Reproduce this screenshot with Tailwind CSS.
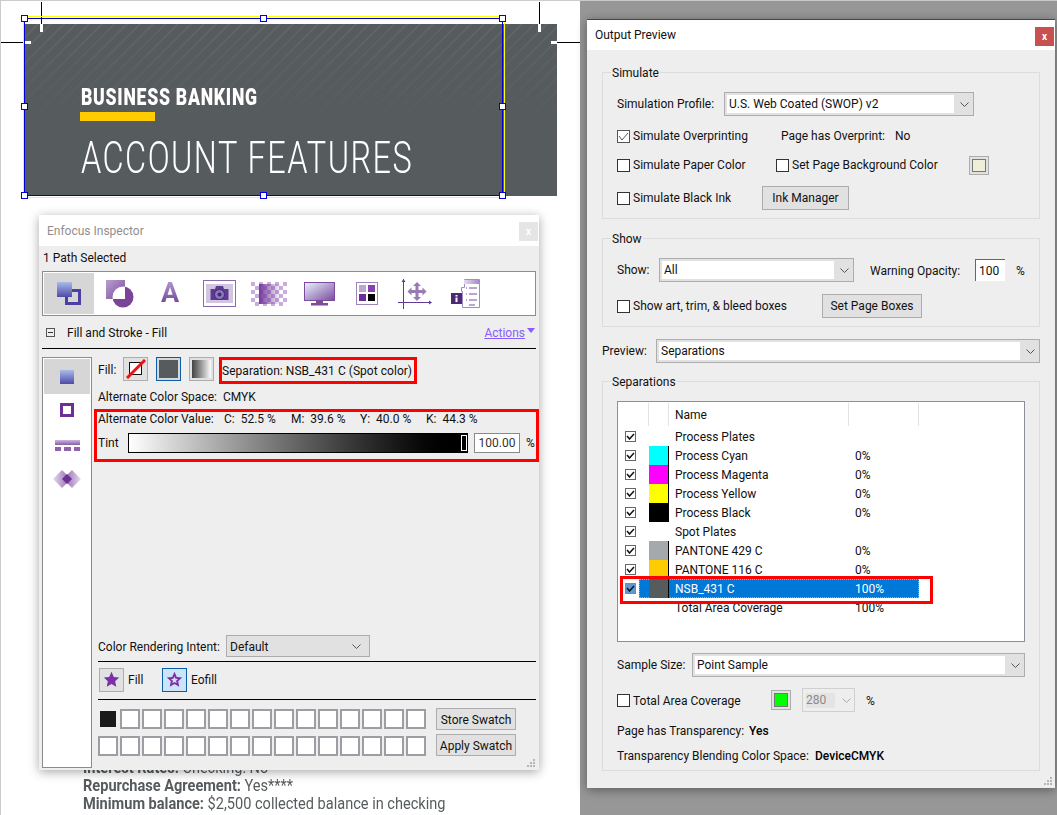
<!DOCTYPE html>
<html>
<head>
<meta charset="utf-8">
<title>Output Preview</title>
<script src="https://cdn.jsdelivr.net/npm/@tailwindcss/browser@4"></script>
</head>
<body class="w-[1057px] h-[815px] overflow-hidden font-[Roboto,sans-serif] text-[12px] text-[#111]">
<div class="flex w-[1057px] h-[815px]">

  <!-- document canvas -->
  <div class="relative w-[580px] h-[815px] bg-white border-t border-l border-[#cccccc] overflow-hidden">
    <div class="absolute left-[23px] top-[23px] w-[533px] h-[172px] bg-[#565b5d] overflow-hidden">
      <div class="absolute inset-0 bg-[image:repeating-linear-gradient(135deg,#5f6466_0px,#5f6466_2px,transparent_2px,transparent_9px)] [mask-image:linear-gradient(to_bottom,black,transparent_60%)]"></div>
      <div class="absolute left-[57px] top-[59px] text-white">
        <div class="origin-left scale-x-[0.735] whitespace-nowrap font-black text-[24px] leading-[28px] tracking-[1px]">BUSINESS BANKING</div>
        <div class="w-[75px] h-[9px] bg-[#ffcc00] mt-[1px] -ml-[1px]"></div>
        <div class="origin-left scale-x-[0.737] whitespace-nowrap font-light text-[44px] leading-[54px] mt-[10px] tracking-[2px]">ACCOUNT FEATURES</div>
      </div>
    </div>

    <!-- crop marks -->
    <div class="absolute left-[40px] top-[1px] w-[1px] h-[22px] bg-black"></div>
    <div class="absolute left-[39px] top-[23px] w-[3px] h-[8px] bg-white"></div>
    <div class="absolute left-[538px] top-[1px] w-[1px] h-[22px] bg-black"></div>
    <div class="absolute left-[537px] top-[23px] w-[3px] h-[8px] bg-white"></div>
    <div class="absolute left-0 top-[41px] w-[22px] h-[1px] bg-black"></div>
    <div class="absolute left-[22px] top-[40px] w-[8px] h-[3px] bg-white"></div>
    <div class="absolute left-[550px] top-[41px] w-[29px] h-[1px] bg-black"></div>
    <div class="absolute left-[550px] top-[40px] w-[6px] h-[3px] bg-white"></div>

    <!-- selection -->
    <div class="absolute left-[22px] top-[15px] w-[482px] h-[182px] border border-[#ffff00]"></div>
    <div class="absolute left-[23px] top-[17px] w-[479px] h-[178px] border border-[#0000dd]"></div>
    <div class="absolute left-[20px] top-[14px] w-[7px] h-[7px] bg-white border border-[#0000dd]"></div>
    <div class="absolute left-[259px] top-[14px] w-[7px] h-[7px] bg-white border border-[#0000dd]"></div>
    <div class="absolute left-[498px] top-[14px] w-[7px] h-[7px] bg-white border border-[#0000dd]"></div>
    <div class="absolute left-[20px] top-[102px] w-[7px] h-[7px] bg-white border border-[#0000dd]"></div>
    <div class="absolute left-[498px] top-[102px] w-[7px] h-[7px] bg-white border border-[#0000dd]"></div>
    <div class="absolute left-[20px] top-[191px] w-[7px] h-[7px] bg-white border border-[#0000dd]"></div>
    <div class="absolute left-[259px] top-[191px] w-[7px] h-[7px] bg-white border border-[#0000dd]"></div>
    <div class="absolute left-[498px] top-[191px] w-[7px] h-[7px] bg-white border border-[#0000dd]"></div>

    <!-- body copy behind the inspector -->
    <div class="absolute left-[82px] top-[758px] text-[#565b5d] text-[16px] leading-[18px] origin-left scale-x-[0.91] whitespace-nowrap">
      <div><b>Interest Rates:</b> Checking: No</div>
      <div><b>Repurchase Agreement:</b> Yes****</div>
      <div><b>Minimum balance:</b> $2,500 collected balance in checking</div>
    </div>

    <!-- Enfocus Inspector -->
    <div class="absolute left-[38px] top-[214px] w-[500px] h-[555px] bg-[#eeeeee] shadow-[0_2px_10px_rgba(0,0,0,0.35)] flex flex-col">
      <div class="h-[31px] bg-white flex items-center justify-between pl-[8px] pr-[1px] shrink-0">
        <span class="text-[#8f8f8f]">Enfocus Inspector</span>
        <div class="w-[19px] h-[19px] mt-[1px] bg-[#e5e5e5] text-white text-[10px] font-bold flex items-center justify-center">x</div>
      </div>
      <div class="h-[25px] pl-[4px] pb-[2px] flex items-center shrink-0">1 Path Selected</div>

      <div class="mx-[3px] h-[45px] border border-[#8c8c90] p-px bg-white flex items-center shrink-0">
        <div class="w-[50px] h-[41px] bg-[#d6d6d6] flex items-center justify-center shrink-0">
          <svg width="24" height="23" viewBox="0 0 24 23">
            <defs><linearGradient id="g1" x1="0" y1="0" x2="0" y2="1"><stop offset="0" stop-color="#a8bce8"/><stop offset="1" stop-color="#4f4aa8"/></linearGradient></defs>
            <rect x="9.5" y="8.5" width="13" height="13" fill="none" stroke="#4a3fa5" stroke-width="3"/>
            <rect x="0" y="0" width="15" height="15" fill="url(#g1)"/>
          </svg>
        </div>
        <div class="w-[12px] shrink-0"></div>
        <svg class="shrink-0" width="28" height="28" viewBox="0 0 28 28">
          <defs>
            <linearGradient id="g2" x1="0" y1="0" x2="1" y2="1"><stop offset="0" stop-color="#b7a0cf"/><stop offset="1" stop-color="#7a4a9e"/></linearGradient>
            <clipPath id="c2"><rect x="0" y="0" width="19" height="19"/></clipPath>
          </defs>
          <rect x="0" y="0" width="19" height="19" fill="url(#g2)"/>
          <circle cx="17" cy="17" r="10.5" fill="#7a4598"/>
          <circle cx="17" cy="17" r="10.5" fill="#ffffff" clip-path="url(#c2)"/>
        </svg>
        <div class="w-[26px] shrink-0 ml-[23px] flex justify-center">
          <span class="font-bold text-[27px] leading-[27px] bg-linear-to-b from-[#b39bcc] to-[#6b3a96] bg-clip-text text-transparent">A</span>
        </div>
        <svg class="shrink-0 ml-[20px]" width="33" height="27" viewBox="0 0 33 27">
          <rect x="0.5" y="0.5" width="32" height="26" fill="#fff" stroke="#8a6aa8"/>
          <rect x="3" y="4" width="27" height="19" fill="#d2c5e0"/>
          <path d="M7.500 9h4.500l1-3h7l1 3h4.500v11h-18z" fill="#5f3a92"/>
          <circle cx="16.500" cy="14.500" r="5" fill="#8d76b6" stroke="#43277a"/>
          <circle cx="16.500" cy="14.500" r="2" fill="#43277a"/>
        </svg>
        <svg class="shrink-0 ml-[15px]" width="36" height="24" viewBox="0 0 36 24">
          <defs>
            <pattern id="p5" width="8" height="8" patternUnits="userSpaceOnUse"><rect width="4" height="4" fill="#c9aedd"/><rect x="4" y="4" width="4" height="4" fill="#c9aedd"/></pattern>
            <linearGradient id="g5" x1="0" y1="0" x2="1" y2="0"><stop offset="0" stop-color="#74389c"/><stop offset="1" stop-color="#74389c" stop-opacity="0"/></linearGradient>
          </defs>
          <rect width="36" height="24" fill="url(#p5)"/>
          <rect x="8" y="2" width="22" height="20" fill="url(#g5)"/>
        </svg>
        <svg class="shrink-0 ml-[17px]" width="31" height="24" viewBox="0 0 31 24">
          <defs><linearGradient id="g6" x1="0" y1="0" x2="1" y2="1"><stop offset="0" stop-color="#e8f5fc"/><stop offset="1" stop-color="#7a4a9e"/></linearGradient></defs>
          <rect x="0.5" y="0.5" width="30" height="18" fill="url(#g6)" stroke="#7d4a9e"/>
          <rect x="12" y="19" width="7" height="2" fill="#7d4a9e"/>
          <rect x="7" y="21" width="17" height="2.500" fill="#7d4a9e"/>
        </svg>
        <svg class="shrink-0 ml-[21px]" width="22" height="23" viewBox="0 0 22 23">
          <rect x="0.5" y="0.5" width="21" height="22" fill="#fff" stroke="#9e84bb"/>
          <rect x="3" y="3" width="7" height="7" fill="#b8a8cc"/>
          <rect x="12" y="3" width="7" height="7" fill="#8a3fb0"/>
          <rect x="3" y="12" width="7" height="7" fill="#6f2f9a"/>
          <rect x="12" y="12" width="7" height="7" fill="#000"/>
        </svg>
        <svg class="shrink-0 ml-[20px]" width="34" height="30" viewBox="0 0 34 30">
          <path d="M5.500 0v30M0 23.500h33" stroke="#5f3a92" fill="none"/>
          <path d="M5.500 0l-2 3h4zM34 23.500l-3-2v4z" fill="#5f3a92"/>
          <path d="M19 3l4 4h-2.500v4h4v-2.500l4 4-4 4v-2.500h-4v4h2.500l-4 4-4-4h2.500v-4h-4v2.500l-4-4 4-4v2.500h4v-4h-2.500z" fill="#9a7ab5"/>
        </svg>
        <svg class="shrink-0 ml-[19px]" width="29" height="29" viewBox="0 0 29 29">
          <defs><linearGradient id="g9" x1="0" y1="0" x2="1" y2="0"><stop offset="0" stop-color="#e5dcef"/><stop offset="1" stop-color="#a58bc6"/></linearGradient></defs>
          <path d="M13.500 0.500h15v28h-17v-16h-1v-4h3z" fill="#fff" stroke="#a58bc6"/>
          <rect x="13" y="1" width="15" height="4" fill="url(#g9)"/>
          <path d="M18 9h8M18 15h8M18 21h8M18 26h6" stroke="#7d4a9e" fill="none"/>
          <path d="M15 9h1M15 15h1M15 21h1" stroke="#7d4a9e" fill="none"/>
          <rect x="0" y="14" width="11" height="11" fill="#4b2a72"/>
          <rect x="4.500" y="16" width="2" height="1.500" fill="#fff"/>
          <rect x="4.500" y="18.500" width="2" height="4.500" fill="#fff"/>
        </svg>
      </div>

      <div class="mx-[3px] h-[33px] border-b border-black flex items-center shrink-0 relative">
        <div class="w-[9px] h-[9px] ml-[4px] border border-[#555] flex items-center justify-center shrink-0"><div class="w-[5px] h-px bg-[#333]"></div></div>
        <span class="ml-[12px] pt-[2px]">Fill and Stroke - Fill</span>
        <span class="ml-auto pt-[2px] text-[#8a5cff] underline">Actions</span>
        <svg class="ml-[2px] mr-[1px] mb-[3px]" width="8" height="5" viewBox="0 0 8 5"><path d="M0 0h8l-4 5z" fill="#8a5cff"/></svg>
      </div>

      <div class="flex flex-1 min-h-0 ml-[3px] mt-[8px] mb-[3px]">
        <div class="w-[50px] h-[411px] shrink-0 border border-[#8a8a90] bg-white flex flex-col items-center">
          <div class="w-[46px] h-[35px] mt-px bg-[#d6d6d6] flex items-center justify-center shrink-0">
            <svg width="14" height="14" viewBox="0 0 14 14"><rect width="14" height="14" fill="url(#g1)"/></svg>
          </div>
          <svg class="mt-[9px] shrink-0" width="14" height="14" viewBox="0 0 14 14"><rect x="1.500" y="1.500" width="11" height="11" fill="#fff" stroke="#6b2f96" stroke-width="3"/></svg>
          <svg class="mt-[23px] shrink-0" width="25" height="11" viewBox="0 0 25 11">
            <defs><linearGradient id="g3" x1="0" y1="0" x2="0" y2="1"><stop offset="0" stop-color="#cbb7dc"/><stop offset="1" stop-color="#8a5aaa"/></linearGradient></defs>
            <rect width="25" height="5" fill="url(#g3)"/>
            <rect y="7" width="6" height="4" fill="#9063ae"/><rect x="9" y="7" width="7" height="4" fill="#9063ae"/><rect x="19" y="7" width="6" height="4" fill="#9063ae"/>
          </svg>
          <svg class="mt-[19px] shrink-0" width="28" height="18" viewBox="0 0 28 18">
            <defs>
              <linearGradient id="g4a" x1="0" y1="0" x2="1" y2="0"><stop offset="0" stop-color="#e6dcef"/><stop offset="1" stop-color="#8a5aaa"/></linearGradient>
              <linearGradient id="g4b" x1="0" y1="0" x2="1" y2="0"><stop offset="0" stop-color="#8a5aaa"/><stop offset="1" stop-color="#e6dcef"/></linearGradient>
            </defs>
            <path d="M9 0l9 9-9 9-9-9z" fill="url(#g4a)"/>
            <path d="M19 0l9 9-9 9-9-9z" fill="url(#g4b)"/>
            <path d="M14 4l5 5-5 5-5-5z" fill="#6b2f96"/>
          </svg>
        </div>

        <div class="flex flex-col ml-[6px] w-[438px] relative">
          <div class="h-[27px] flex items-start shrink-0">
            <span class="w-[25px] h-[24px] pt-[2px] flex items-center shrink-0">Fill:</span>
            <div class="w-[25px] h-[24px] border border-[#adadad] bg-[#e1e1e1] flex items-center justify-center shrink-0">
              <svg width="20" height="20" viewBox="0 0 20 20"><rect x="3.500" y="3.500" width="12" height="12" fill="#fff" stroke="#111"/><path d="M1 19L19 1" stroke="#f01010" stroke-width="3"/></svg>
            </div>
            <div class="w-[25px] h-[24px] ml-[8px] border border-[#0a5ea8] bg-[#d8d8d8] p-[2px] shrink-0"><div class="w-full h-full bg-[#565b5d]"></div></div>
            <div class="w-[25px] h-[24px] ml-[8px] border border-[#adadad] bg-[#e1e1e1] p-[2px] shrink-0"><div class="w-full h-full bg-linear-to-r from-[#444] to-white"></div></div>
            <div class="w-[198px] h-[27px] ml-[5px] border-[3px] border-[#ff0000] flex items-center whitespace-nowrap tracking-[0.04px] shrink-0">Separation: NSB_431 C (Spot color)</div>
          </div>
          <div class="h-[25px] pt-px flex items-center shrink-0">Alternate Color Space:&nbsp;&nbsp;CMYK</div>

          <div class="-ml-[4px] w-[445px] h-[53px] border-[3px] border-[#ff0000] pl-[1px] shrink-0">
            <div class="h-[14px] flex items-center whitespace-nowrap">
              <span class="w-[126px] shrink-0">Alternate Color Value:</span>
              <span class="w-[67px] shrink-0">C:&nbsp;&nbsp;52.5 %</span>
              <span class="w-[69px] shrink-0">M:&nbsp;&nbsp;39.6 %</span>
              <span class="w-[66px] shrink-0">Y:&nbsp;&nbsp;40.0 %</span>
              <span class="shrink-0">K:&nbsp;&nbsp;44.3 %</span>
            </div>
            <div class="h-[21px] mt-[6px] flex items-center">
              <span class="w-[30px] shrink-0">Tint</span>
              <div class="relative w-[340px] h-[20px] border border-black bg-linear-to-r from-white to-black shrink-0">
                <div class="absolute right-0 top-px w-[6px] h-[16px] bg-black border border-white"></div>
              </div>
              <div class="w-[46px] h-[20px] ml-[6px] border border-[#8a8a8a] bg-white flex items-center justify-center shrink-0 text-[#333]">100.00</div>
              <span class="ml-[6px]">%</span>
            </div>
          </div>

          <div class="mt-auto h-[22px] flex items-center shrink-0">
            <span class="w-[128px] pt-[2px] shrink-0 whitespace-nowrap">Color Rendering Intent:</span>
            <div class="w-[144px] h-[22px] border border-[#adadad] bg-[#e1e1e1] flex items-center justify-between pl-[3px] pr-[8px]">
              <span class="pt-[2px]">Default</span>
              <svg width="9" height="5" viewBox="0 0 9 5"><path d="M0.500 0.500l4 4 4-4" fill="none" stroke="#555"/></svg>
            </div>
          </div>
          <div class="border-b border-black mt-[4px] shrink-0"></div>
          <div class="h-[38px] pb-[2px] flex items-center shrink-0 border-b border-black">
            <div class="w-[25px] h-[24px] ml-px border border-[#adadad] bg-[#e1e1e1] flex items-center justify-center shrink-0">
              <svg width="17" height="17" viewBox="0 0 20 20"><path d="M10 1l2.700 6 6.300.7-4.700 4.300 1.300 6.500-5.600-3.300-5.600 3.300 1.300-6.500L1 7.700 7.300 7z" fill="#7b2fa8"/></svg>
            </div>
            <span class="ml-[4px] w-[34px] shrink-0">Fill</span>
            <div class="w-[25px] h-[24px] border border-[#0a5ea8] bg-[#cce4f7] flex items-center justify-center shrink-0">
              <svg width="17" height="17" viewBox="0 0 20 20"><path d="M10 1l2.700 6 6.300.7-4.700 4.300 1.300 6.500-5.600-3.300-5.600 3.300 1.300-6.500L1 7.700 7.300 7z" fill="#7b2fa8"/><path d="M10 6.500l1.200 2.700 2.900.3-2.200 2 .6 3-2.500-1.500-2.500 1.500.6-3-2.200-2 2.900-.3z" fill="#cce4f7"/></svg>
            </div>
            <span class="ml-[4px]">Eofill</span>
          </div>
          <div class="flex mt-[8px] mb-[11px] shrink-0">
            <div class="grid grid-cols-[repeat(15,20px)] gap-x-[2px] gap-y-[6px] mt-px">
              <div class="h-[20px] border-2 border-transparent bg-[#1a1a1a] bg-clip-padding"></div>
              <div class="h-[20px] border-2 border-[#9d9da3] bg-white"></div><div class="h-[20px] border-2 border-[#9d9da3] bg-white"></div><div class="h-[20px] border-2 border-[#9d9da3] bg-white"></div><div class="h-[20px] border-2 border-[#9d9da3] bg-white"></div>
              <div class="h-[20px] border-2 border-[#9d9da3] bg-white"></div><div class="h-[20px] border-2 border-[#9d9da3] bg-white"></div><div class="h-[20px] border-2 border-[#9d9da3] bg-white"></div><div class="h-[20px] border-2 border-[#9d9da3] bg-white"></div>
              <div class="h-[20px] border-2 border-[#9d9da3] bg-white"></div><div class="h-[20px] border-2 border-[#9d9da3] bg-white"></div><div class="h-[20px] border-2 border-[#9d9da3] bg-white"></div><div class="h-[20px] border-2 border-[#9d9da3] bg-white"></div>
              <div class="h-[20px] border-2 border-[#9d9da3] bg-white"></div><div class="h-[20px] border-2 border-[#9d9da3] bg-white"></div>
              <div class="h-[20px] border-2 border-[#9d9da3] bg-white"></div><div class="h-[20px] border-2 border-[#9d9da3] bg-white"></div><div class="h-[20px] border-2 border-[#9d9da3] bg-white"></div><div class="h-[20px] border-2 border-[#9d9da3] bg-white"></div><div class="h-[20px] border-2 border-[#9d9da3] bg-white"></div>
              <div class="h-[20px] border-2 border-[#9d9da3] bg-white"></div><div class="h-[20px] border-2 border-[#9d9da3] bg-white"></div><div class="h-[20px] border-2 border-[#9d9da3] bg-white"></div><div class="h-[20px] border-2 border-[#9d9da3] bg-white"></div><div class="h-[20px] border-2 border-[#9d9da3] bg-white"></div>
              <div class="h-[20px] border-2 border-[#9d9da3] bg-white"></div><div class="h-[20px] border-2 border-[#9d9da3] bg-white"></div><div class="h-[20px] border-2 border-[#9d9da3] bg-white"></div><div class="h-[20px] border-2 border-[#9d9da3] bg-white"></div><div class="h-[20px] border-2 border-[#9d9da3] bg-white"></div>
            </div>
            <div class="ml-[10px] flex flex-col gap-[4px]">
              <div class="w-[80px] h-[22px] pt-[2px] border border-[#adadad] bg-[#e1e1e1] flex items-center justify-center">Store Swatch</div>
              <div class="w-[80px] h-[22px] pt-[2px] border border-[#adadad] bg-[#e1e1e1] flex items-center justify-center">Apply Swatch</div>
            </div>
          </div>
        </div>
      </div>
      <svg class="absolute right-[3px] bottom-[2px]" width="9" height="9" viewBox="0 0 9 9"><path d="M6 0h2v2h-2zM3 3h2v2h-2zM6 3h2v2h-2zM0 6h2v2h-2zM3 6h2v2h-2zM6 6h2v2h-2z" fill="#b5b5b5"/></svg>
    </div>
  </div>

  <!-- Output Preview -->
  <div class="relative flex-1 h-[815px] bg-[#979797] border-t border-[#c8c8c8]">
    <div class="absolute left-[7px] top-[18px] w-[468px] h-[769px] bg-[#eeeeee] border-t border-[#444] shadow-[0_2px_10px_rgba(0,0,0,0.4)] flex flex-col">
      <div class="h-[30px] bg-white flex items-start justify-between pl-[8px] pr-[1px] shrink-0">
        <span class="mt-[6px]">Output Preview</span>
        <div class="w-[19px] h-[19px] mt-[7px] bg-[#c75050] text-white text-[10px] font-bold flex items-center justify-center">x</div>
      </div>

      <!-- Simulate -->
      <div class="relative mx-[15px] mt-[22px] h-[147px] border border-[#dcdcdc] pl-[14px] pt-[19px] shrink-0">
        <span class="absolute -top-[9px] left-[8px] bg-[#eeeeee] px-px">Simulate</span>
        <div class="h-[24px] flex items-center">
          <span class="w-[107px] shrink-0">Simulation Profile:</span>
          <div class="w-[250px] h-[24px] border border-[#adadad] bg-[#e1e1e1] p-[2px] flex items-center">
            <div class="w-[227px] h-[18px] bg-white flex items-center pl-[2px]">U.S. Web Coated (SWOP) v2</div>
            <svg class="ml-[6px]" width="9" height="5" viewBox="0 0 9 5"><path d="M0.500 0.500l4 4 4-4" fill="none" stroke="#555"/></svg>
          </div>
        </div>
        <div class="h-[20px] mt-[10px] flex items-center">
          <div class="w-[13px] h-[13px] border border-[#555] bg-white flex items-center justify-center shrink-0">
            <svg width="11" height="9" viewBox="0 0 11 9"><path d="M1 4l3 4 6-7" fill="none" stroke="#555"/></svg>
          </div>
          <span class="ml-[3px] w-[148px] shrink-0">Simulate Overprinting</span>
          <span class="w-[114px] shrink-0">Page has Overprint:</span>
          <span>No</span>
        </div>
        <div class="h-[20px] mt-[9px] flex items-center">
          <div class="w-[13px] h-[13px] border border-[#333] bg-white shrink-0"></div>
          <span class="ml-[3px] w-[143px] shrink-0">Simulate Paper Color</span>
          <div class="w-[13px] h-[13px] border border-[#333] bg-white shrink-0"></div>
          <span class="ml-[3px] w-[177px] shrink-0">Set Page Background Color</span>
          <div class="w-[20px] h-[19px] border border-[#adadad] bg-[#e1e1e1] p-[2px] shrink-0"><div class="w-full h-full bg-[#efefd8] border border-[#777]"></div></div>
        </div>
        <div class="h-[24px] mt-[11px] flex items-center">
          <div class="w-[13px] h-[13px] border border-[#333] bg-white shrink-0"></div>
          <span class="ml-[3px] w-[129px] shrink-0">Simulate Black Ink</span>
          <div class="w-[87px] h-[24px] border border-[#adadad] bg-[#e1e1e1] flex items-center justify-center">Ink Manager</div>
        </div>
      </div>

      <!-- Show -->
      <div class="relative mx-[15px] mt-[19px] h-[89px] border border-[#dcdcdc] pl-[14px] pt-[19px] shrink-0">
        <span class="absolute -top-[9px] left-[8px] bg-[#eeeeee] px-px">Show</span>
        <div class="h-[24px] flex items-center">
          <span class="w-[42px] shrink-0">Show:</span>
          <div class="w-[195px] h-[24px] border border-[#adadad] bg-[#e1e1e1] p-[2px] flex items-center shrink-0">
            <div class="w-[172px] h-[18px] bg-white flex items-center pl-[2px]">All</div>
            <svg class="ml-[6px]" width="9" height="5" viewBox="0 0 9 5"><path d="M0.500 0.500l4 4 4-4" fill="none" stroke="#555"/></svg>
          </div>
          <span class="ml-[16px] w-[105px] pt-[2px] shrink-0">Warning Opacity:</span>
          <div class="w-[30px] h-[22px] bg-white border-t border-l border-[#666] flex items-center pl-[3px] shrink-0">100</div>
          <span class="ml-[11px] pt-[2px]">%</span>
        </div>
        <div class="h-[24px] mt-[12px] flex items-center">
          <div class="w-[13px] h-[13px] border border-[#333] bg-white shrink-0"></div>
          <span class="ml-[3px] w-[189px] shrink-0">Show art, trim, &amp; bleed boxes</span>
          <div class="w-[100px] h-[24px] border border-[#adadad] bg-[#e1e1e1] flex items-center justify-center">Set Page Boxes</div>
        </div>
      </div>

      <!-- Preview -->
      <div class="mx-[15px] mt-[12px] h-[24px] flex items-center shrink-0">
        <span class="w-[54px] shrink-0">Preview:</span>
        <div class="flex-1 h-[24px] border border-[#adadad] bg-[#e1e1e1] p-[2px] flex items-center">
          <div class="w-[361px] h-[18px] bg-white flex items-center pl-[2px]">Separations</div>
          <svg class="ml-[6px]" width="9" height="5" viewBox="0 0 9 5"><path d="M0.500 0.500l4 4 4-4" fill="none" stroke="#555"/></svg>
        </div>
      </div>

      <!-- Separations -->
      <div class="relative mx-[15px] mt-[18px] h-[390px] border border-[#dcdcdc] pl-[14px] pt-[19px] shrink-0">
        <span class="absolute -top-[9px] left-[8px] bg-[#eeeeee] px-px">Separations</span>
        <div class="w-[408px] h-[241px] border border-[#8a8f99] bg-white">
          <div class="h-[25px] flex items-stretch pt-px pb-[1px]">
            <div class="w-[31px] border-r border-[#e3e3e3]"></div>
            <div class="w-[20px] border-r border-[#e3e3e3]"></div>
            <div class="w-[180px] border-r border-[#e3e3e3] pl-[6px] flex items-center">Name</div>
            <div class="w-[70px] border-r border-[#e3e3e3]"></div>
          </div>
          <div class="h-[19px] flex items-center">
            <div class="w-[11px] h-[11px] ml-[7px] border border-[#666] bg-white flex items-center justify-center shrink-0"><svg width="9" height="7" viewBox="0 0 9 7"><path d="M1 3l2.500 3 4.500-5" fill="none" stroke="#111" stroke-width="1.500"/></svg></div>
            <div class="w-[20px] ml-[13px] shrink-0"></div>
            <span class="ml-[6px]">Process Plates</span>
          </div>
          <div class="h-[19px] flex items-center">
            <div class="w-[11px] h-[11px] ml-[7px] border border-[#666] bg-white flex items-center justify-center shrink-0"><svg width="9" height="7" viewBox="0 0 9 7"><path d="M1 3l2.500 3 4.500-5" fill="none" stroke="#111" stroke-width="1.500"/></svg></div>
            <div class="w-[20px] h-[19px] ml-[13px] bg-[#00ffff] border-r border-black shrink-0"></div>
            <span class="ml-[6px] w-[180px] shrink-0">Process Cyan</span><span>0%</span>
          </div>
          <div class="h-[19px] flex items-center">
            <div class="w-[11px] h-[11px] ml-[7px] border border-[#666] bg-white flex items-center justify-center shrink-0"><svg width="9" height="7" viewBox="0 0 9 7"><path d="M1 3l2.500 3 4.500-5" fill="none" stroke="#111" stroke-width="1.500"/></svg></div>
            <div class="w-[20px] h-[19px] ml-[13px] bg-[#ff00ff] border-r border-black shrink-0"></div>
            <span class="ml-[6px] w-[180px] shrink-0">Process Magenta</span><span>0%</span>
          </div>
          <div class="h-[19px] flex items-center">
            <div class="w-[11px] h-[11px] ml-[7px] border border-[#666] bg-white flex items-center justify-center shrink-0"><svg width="9" height="7" viewBox="0 0 9 7"><path d="M1 3l2.500 3 4.500-5" fill="none" stroke="#111" stroke-width="1.500"/></svg></div>
            <div class="w-[20px] h-[19px] ml-[13px] bg-[#ffff00] border-r border-black shrink-0"></div>
            <span class="ml-[6px] w-[180px] shrink-0">Process Yellow</span><span>0%</span>
          </div>
          <div class="h-[19px] flex items-center">
            <div class="w-[11px] h-[11px] ml-[7px] border border-[#666] bg-white flex items-center justify-center shrink-0"><svg width="9" height="7" viewBox="0 0 9 7"><path d="M1 3l2.500 3 4.500-5" fill="none" stroke="#111" stroke-width="1.500"/></svg></div>
            <div class="w-[20px] h-[19px] ml-[13px] bg-black border-r border-black shrink-0"></div>
            <span class="ml-[6px] w-[180px] shrink-0">Process Black</span><span>0%</span>
          </div>
          <div class="h-[19px] flex items-center">
            <div class="w-[11px] h-[11px] ml-[7px] border border-[#666] bg-white flex items-center justify-center shrink-0"><svg width="9" height="7" viewBox="0 0 9 7"><path d="M1 3l2.500 3 4.500-5" fill="none" stroke="#111" stroke-width="1.500"/></svg></div>
            <div class="w-[20px] ml-[13px] shrink-0"></div>
            <span class="ml-[6px]">Spot Plates</span>
          </div>
          <div class="h-[19px] flex items-center">
            <div class="w-[11px] h-[11px] ml-[7px] border border-[#666] bg-white flex items-center justify-center shrink-0"><svg width="9" height="7" viewBox="0 0 9 7"><path d="M1 3l2.500 3 4.500-5" fill="none" stroke="#111" stroke-width="1.500"/></svg></div>
            <div class="w-[20px] h-[19px] ml-[13px] bg-[#a6a9ac] border-r border-black shrink-0"></div>
            <span class="ml-[6px] w-[180px] shrink-0">PANTONE 429 C</span><span>0%</span>
          </div>
          <div class="h-[19px] flex items-center">
            <div class="w-[11px] h-[11px] ml-[7px] border border-[#666] bg-white flex items-center justify-center shrink-0"><svg width="9" height="7" viewBox="0 0 9 7"><path d="M1 3l2.500 3 4.500-5" fill="none" stroke="#111" stroke-width="1.500"/></svg></div>
            <div class="w-[20px] h-[19px] ml-[13px] bg-[#ffcc00] border-r border-black shrink-0"></div>
            <span class="ml-[6px] w-[180px] shrink-0">PANTONE 116 C</span><span>0%</span>
          </div>
          <div class="relative h-[19px] flex items-center text-white">
            <div class="absolute left-[21px] top-0 w-[280px] h-[19px] bg-[#0078d7] border border-dotted border-[#f0a030]"></div>
            <div class="relative w-[11px] h-[11px] ml-[7px] border border-[#888] bg-[#5b9bd5] flex items-center justify-center shrink-0"><svg width="9" height="7" viewBox="0 0 9 7"><path d="M1 3l2.500 3 4.500-5" fill="none" stroke="#111" stroke-width="1.500"/></svg></div>
            <div class="relative w-[20px] h-[19px] ml-[13px] bg-[#565b5d] border-r border-black shrink-0"></div>
            <span class="relative ml-[6px] w-[180px] shrink-0">NSB_431 C</span><span class="relative">100%</span>
            <div class="absolute z-10 left-[2px] -top-[3px] w-[313px] h-[28px] border-[3px] border-[#ff0000]"></div>
          </div>
          <div class="h-[19px] flex items-center">
            <div class="w-[20px] ml-[31px] shrink-0"></div>
            <span class="ml-[6px] w-[180px] shrink-0">Total Area Coverage</span><span>100%</span>
          </div>
        </div>
        <div class="h-[24px] mt-[11px] flex items-center">
          <span class="w-[75px] shrink-0">Sample Size:</span>
          <div class="w-[333px] h-[24px] border border-[#adadad] bg-[#e1e1e1] p-[2px] flex items-center">
            <div class="w-[310px] h-[18px] bg-white flex items-center pl-[2px]">Point Sample</div>
            <svg class="ml-[6px]" width="9" height="5" viewBox="0 0 9 5"><path d="M0.500 0.500l4 4 4-4" fill="none" stroke="#555"/></svg>
          </div>
        </div>
        <div class="h-[24px] mt-[11px] flex items-center">
          <div class="w-[13px] h-[13px] border border-[#333] bg-white shrink-0"></div>
          <span class="ml-[3px] w-[138px] pt-[2px] shrink-0">Total Area Coverage</span>
          <div class="w-[20px] h-[20px] border border-[#adadad] bg-[#e1e1e1] p-[2px] shrink-0"><div class="w-full h-full bg-[#00ff00] border border-[#777]"></div></div>
          <div class="w-[53px] h-[24px] ml-[11px] border border-[#d0d0d0] bg-[#eeeeee] p-[3px] flex items-center shrink-0">
            <div class="w-[29px] h-[15px] bg-[#e4e4e4] text-[#8a8a8a] flex items-center">280</div>
            <svg class="ml-[7px]" width="9" height="5" viewBox="0 0 9 5"><path d="M0.500 0.500l4 4 4-4" fill="none" stroke="#aaa"/></svg>
          </div>
          <span class="ml-[11px] pt-[2px]">%</span>
        </div>
        <div class="h-[20px] mt-[9px] flex items-center">
          <span class="w-[132px] shrink-0">Page has Transparency:</span>
          <span class="font-medium text-black">Yes</span>
        </div>
        <div class="h-[20px] mt-[5px] flex items-center">
          <span class="w-[198px] shrink-0 whitespace-nowrap">Transparency Blending Color Space:</span>
          <span class="font-medium text-black">DeviceCMYK</span>
        </div>
      </div>
      <svg class="absolute right-[2px] bottom-[2px]" width="9" height="9" viewBox="0 0 9 9"><path d="M6 0h2v2h-2zM3 3h2v2h-2zM6 3h2v2h-2zM0 6h2v2h-2zM3 6h2v2h-2zM6 6h2v2h-2z" fill="#b5b5b5"/></svg>
    </div>
  </div>
</div>
</body>
</html>
